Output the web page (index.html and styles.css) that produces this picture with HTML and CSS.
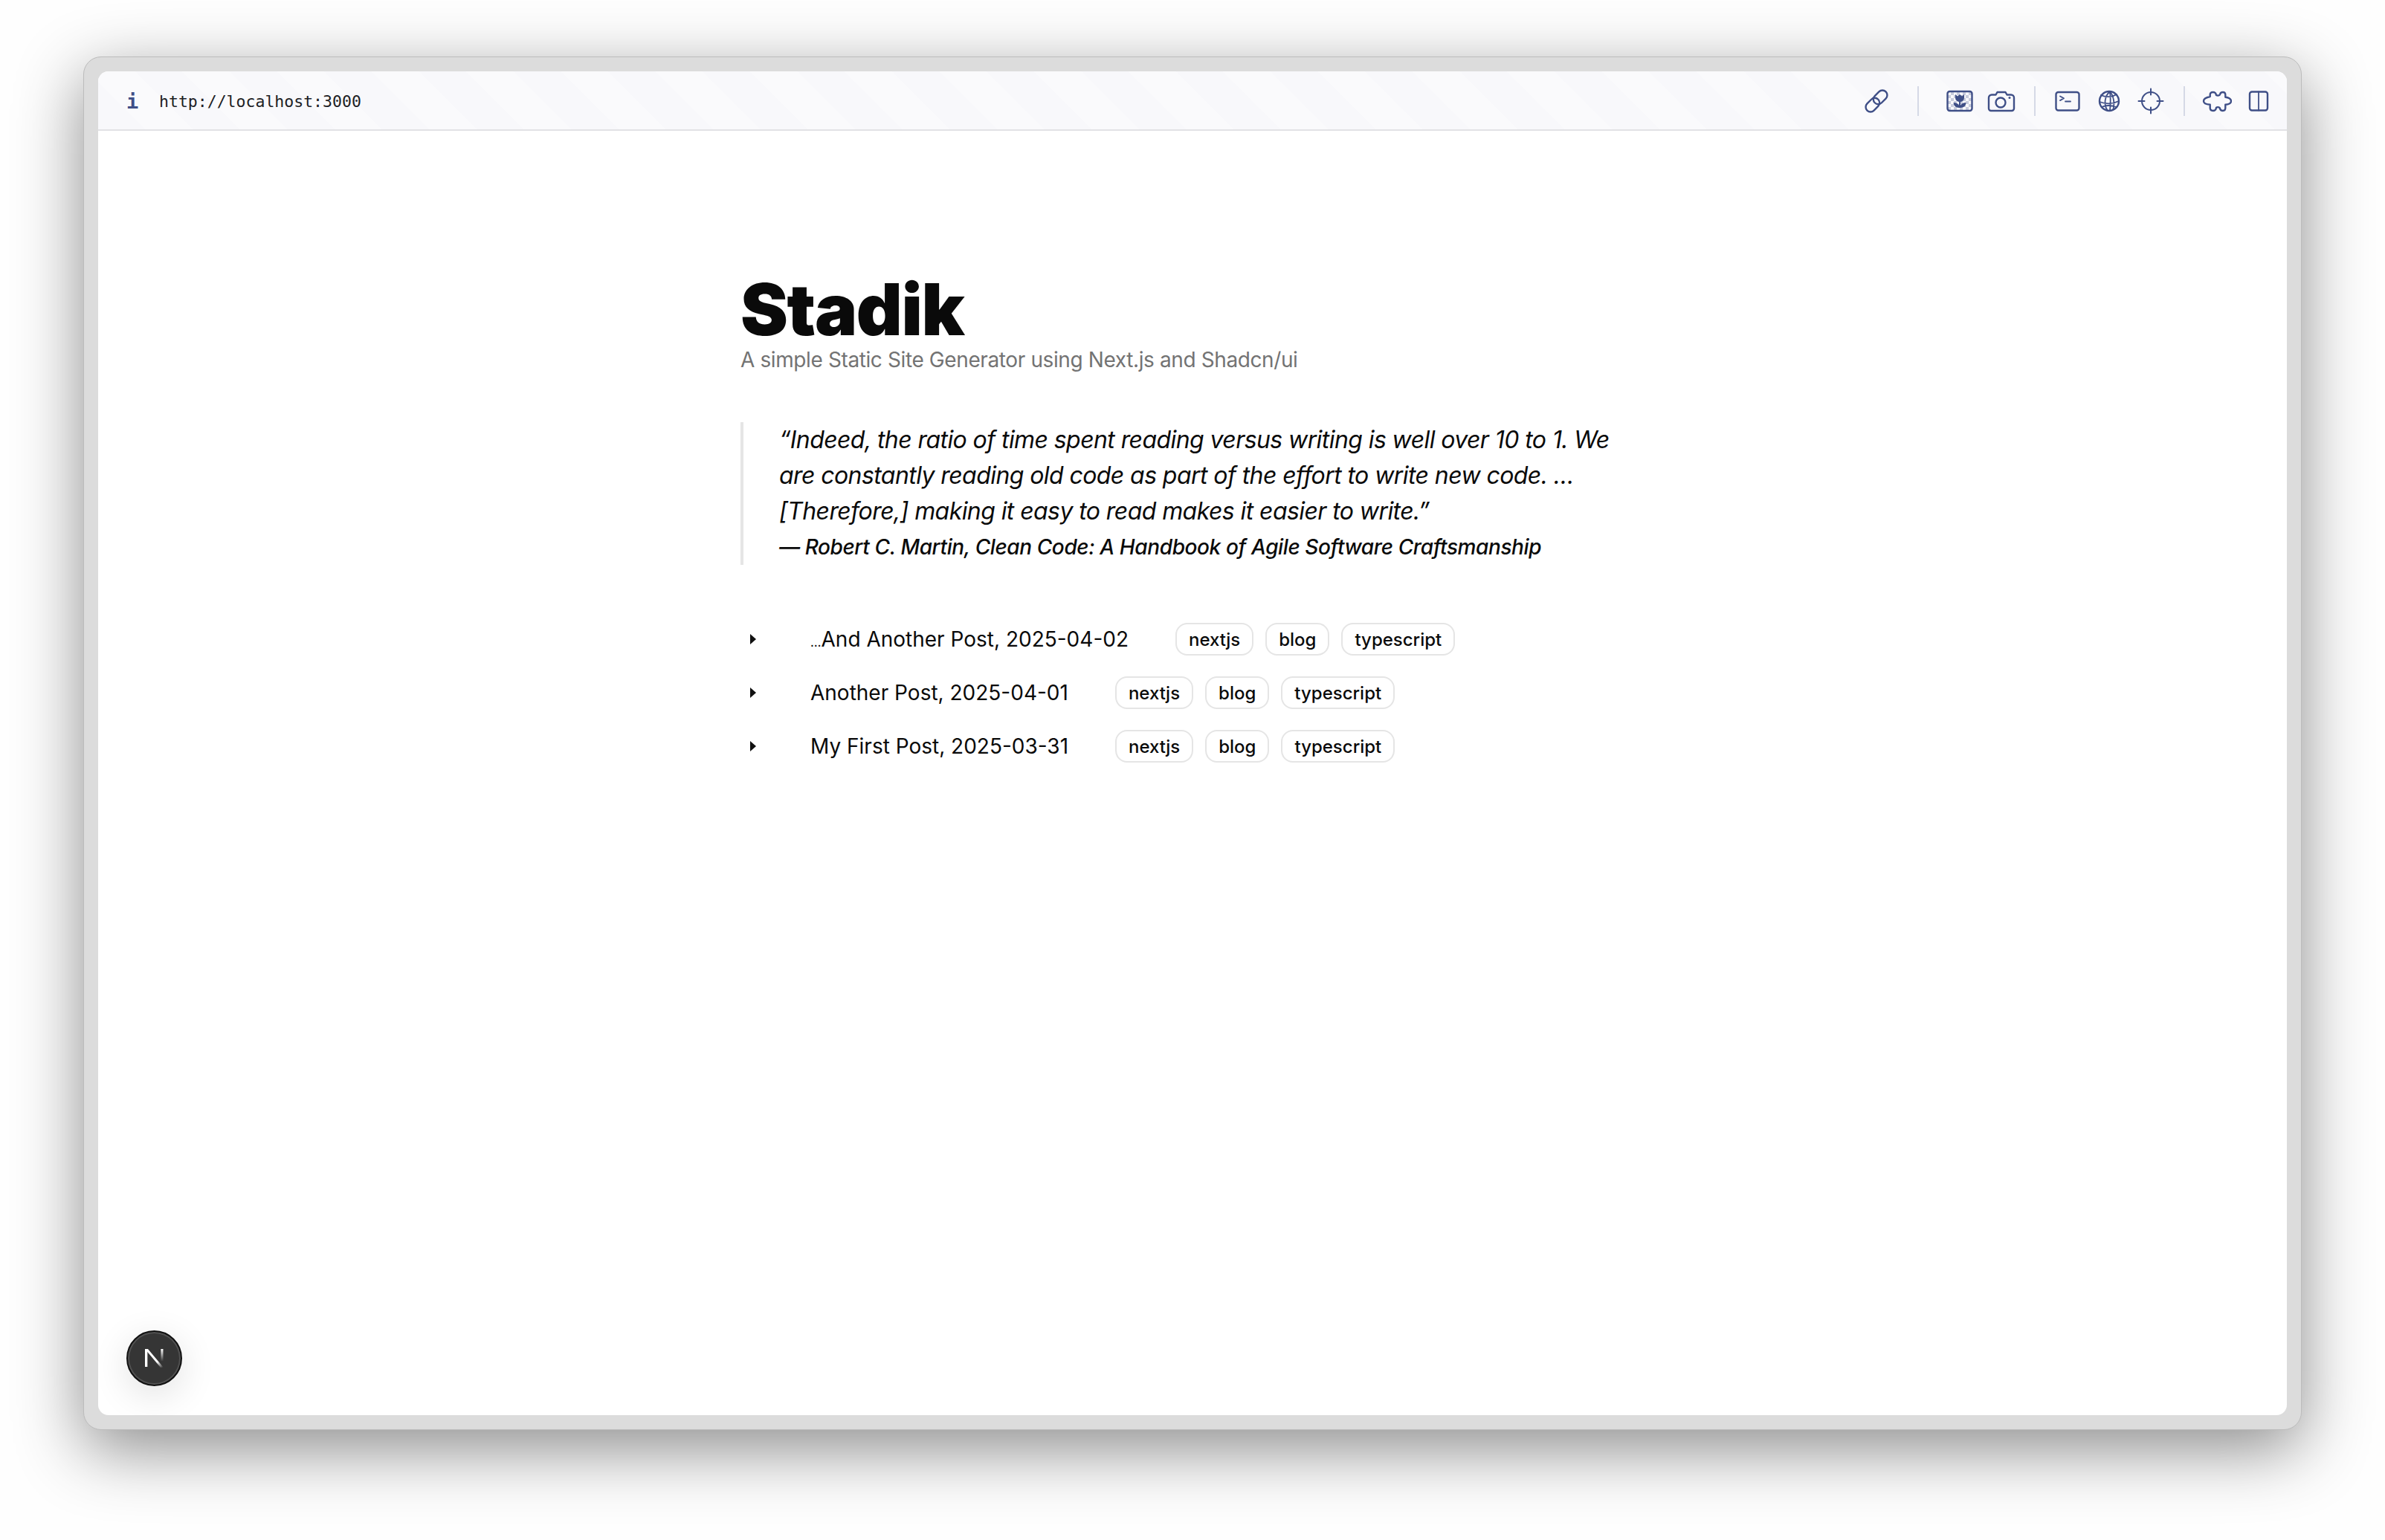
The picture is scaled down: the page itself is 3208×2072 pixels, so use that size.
FILE: index.html
```html
<!DOCTYPE html>
<html lang="en">
<head>
  <meta charset="UTF-8">
  <title>Stadik</title>
  <link rel="stylesheet" href="styles.css">
</head>
<body>
  <div class="frame">
    <div class="window">
      <!-- Toolbar -->
      <header class="toolbar">
        <span class="info">i</span>
        <span class="url">http://localhost:3000</span>
        <div class="tools">
          <svg class="icon" viewBox="0 0 40 40"><rect x="4.350" y="18.650" width="21" height="13" rx="6.500" transform="rotate(-45 14.850 25.150)"/><rect x="14.650" y="8.350" width="21" height="13" rx="6.500" transform="rotate(-45 25.150 14.850)"/></svg>
          <span class="sep sep-wide"></span>
          <svg class="icon" viewBox="0 0 40 40">
            <defs><pattern id="checker" width="8" height="8" patternUnits="userSpaceOnUse"><rect width="4" height="4" fill="#c8ccdc" stroke="none"/><rect x="4" y="4" width="4" height="4" fill="#c8ccdc" stroke="none"/></pattern></defs>
            <rect x="3.500" y="7" width="33" height="26" rx="3" fill="url(#checker)"/>
            <path class="solid" d="M14 11l3 2.500 3-2.500 3 2.500 3-2.500v4.500a6 5.500 0 0 1-12 0z"/>
            <path class="solid" d="M19 20h2v9h-2z"/>
            <path class="solid" d="M11.500 22q7.500 0 8.500 7q-8 .5-8.500-7zM28.500 22q-7.500 0-8.500 7q8 .5 8.500-7z"/>
          </svg>
          <svg class="icon" viewBox="0 0 40 40"><path d="M7 11.500h5.500l2-3.500h11l2 3.500H33a4 4 0 0 1 4 4V30a3 3 0 0 1-3 3H6a3 3 0 0 1-3-3V15.500a4 4 0 0 1 4-4z"/><circle cx="19" cy="22" r="6.500"/><circle class="solid" cx="31" cy="15.500" r="1.500"/></svg>
          <span class="sep"></span>
          <svg class="icon" viewBox="0 0 40 40"><rect x="4.500" y="8" width="31" height="24.500" rx="3"/><path class="thin" d="M10 13.500l5 2.800-5 2.800M17 20.500h7"/></svg>
          <svg class="icon" viewBox="0 0 40 40"><circle cx="20" cy="20" r="13"/><path class="thin" d="M21 7c-7 6-9 18-3 26M21 7c5 6 7 17 4 25M21 7c1 8 1 15 0 26M9 12c6 3 15 3 21-1M7 21c8 3 18 3 26-1M10 28c6-3 14-2 20 0"/></svg>
          <svg class="icon cross" viewBox="0 0 40 40"><circle cx="20" cy="20" r="12"/><path d="M20 3.500v8M20 28.500v8M3.500 20h8M28.500 20h8"/></svg>
          <span class="sep"></span>
          <svg class="icon" viewBox="0 0 40 40"><path d="M10.700 14V11.500C10.700 9 12.500 8 14.700 8C17 8 18.700 9.500 18.700 11C18.700 13 23.500 13 24 11C24.300 9.500 26 8 28 8C30 8 31.300 9.500 31.300 11.500V14.700C35 15 39 17 39 20C39 23 35 24.500 31.300 24.700V29C31.300 31.500 30 33 28 33C26 33 24.300 31.500 24 30C23.500 27.500 18.700 27.500 18.700 30C18.700 31.500 17 33 14.700 33C12.500 33 10.700 31.500 10.700 29V24.700C6 24.500 2 23 2 20C2 17 6 15 10.700 14Z"/></svg>
          <svg class="icon" viewBox="0 0 40 40"><rect x="8" y="7.500" width="24" height="25" rx="3"/><path class="thin" d="M20 7.500v25"/></svg>
        </div>
      </header>

      <main class="content">
        <h1 class="title">Stadik</h1>
        <p class="subtitle">A simple Static Site Generator using Next.js and Shadcn/ui</p>

        <blockquote class="quote">
          <p>“Indeed, the ratio of time spent reading versus writing is well over 10 to 1. We are constantly reading old code as part of the effort to write new code. … [Therefore,] making it easy to read makes it easier to write.”</p>
          <cite>— Robert C. Martin, Clean Code: A Handbook of Agile Software Craftsmanship</cite>
        </blockquote>

        <ul class="posts">
          <li class="post">
            <span class="arrow"></span>
            <span class="post-title"><span class="dots">…</span>And Another Post, 2025-04-02</span>
            <span class="tags"><span class="tag">nextjs</span><span class="tag">blog</span><span class="tag">typescript</span></span>
          </li>
          <li class="post">
            <span class="arrow"></span>
            <span class="post-title">Another Post, 2025-04-01</span>
            <span class="tags"><span class="tag">nextjs</span><span class="tag">blog</span><span class="tag">typescript</span></span>
          </li>
          <li class="post">
            <span class="arrow"></span>
            <span class="post-title">My First Post, 2025-03-31</span>
            <span class="tags"><span class="tag">nextjs</span><span class="tag">blog</span><span class="tag">typescript</span></span>
          </li>
        </ul>
      </main>

      <!-- Dev indicator -->
      <div class="badge">
        <svg viewBox="0 0 24 24" width="25" height="25">
          <defs>
            <linearGradient id="fadeA" gradientUnits="userSpaceOnUse" x1="4" y1="1" x2="23" y2="24"><stop offset="0.65" stop-color="#fff"/><stop offset="1" stop-color="#fff" stop-opacity="0"/></linearGradient>
            <linearGradient id="fadeB" gradientUnits="userSpaceOnUse" x1="0" y1="0" x2="0" y2="16"><stop offset="0" stop-color="#fff"/><stop offset="1" stop-color="#fff" stop-opacity="0"/></linearGradient>
          </defs>
          <path d="M0 0h3.200v23H0z" fill="#fff"/>
          <path d="M0 0h3.800L24 24h-3.800z" fill="url(#fadeA)"/>
          <path d="M20.500 0h3v17h-3z" fill="url(#fadeB)"/>
        </svg>
      </div>
    </div>
  </div>
</body>
</html>
```

FILE: styles.css
```css
/* Page and outer frame */
html, body {
  margin: 0;
  padding: 0;
}

body {
  width: 3208px;
  height: 2072px;
  box-sizing: border-box;
  padding: 76px 112px 148px;
  background: #fefefe;
  font-family: 'Inter', sans-serif;
  color: #0a0a0a;
  overflow: hidden;
}

.frame {
  height: 100%;
  box-sizing: border-box;
  padding: 19px;
  background: #dcdcdc;
  border: 1px solid #bcbcbc;
  border-radius: 24px;
  box-shadow: 0 26px 90px rgba(0, 0, 0, 0.45);
}

.window {
  position: relative;
  height: 100%;
  display: flex;
  flex-direction: column;
  background: white;
  border-radius: 14px;
  overflow: hidden;
}

/* Toolbar */
.toolbar {
  height: 80px;
  box-sizing: border-box;
  flex-shrink: 0;
  display: flex;
  align-items: center;
  padding: 2px 18px 0 38px;
  background: repeating-linear-gradient(45deg, #f8f8fb 0, #f8f8fb 45px, #fafafc 45px, #fafafc 90px);
  border-bottom: 2px solid #e2e2e5;
}

.info {
  width: 44px;
  font-family: 'DejaVu Sans Mono', monospace;
  font-weight: bold;
  font-size: 27px;
  color: #3f4f87;
}

.url {
  font-family: 'DejaVu Sans Mono', monospace;
  font-size: 21.5px;
  color: #202124;
}

.tools {
  margin-left: auto;
  display: flex;
  align-items: center;
  gap: 16px;
}

.icon {
  width: 40px;
  height: 40px;
  fill: none;
  stroke: #3f4f87;
  stroke-width: 2.4;
  stroke-linejoin: round;
  stroke-linecap: round;
}

.icon.cross {
  stroke-width: 2;
}

.icon .thin {
  stroke-width: 1.8;
}

.icon .solid {
  fill: #3f4f87;
  stroke: none;
}

.sep {
  width: 2px;
  height: 40px;
  margin: 0 7px 0 8px;
  background: #d5d9e6;
}

.sep-wide {
  margin: 0 19px;
}

/* Main content */
.content {
  width: 1216px;
  margin: 0 auto;
  padding-top: 192px;
}

.title {
  margin: 0;
  font-size: 96px;
  line-height: 96px;
  font-weight: 900;
  letter-spacing: -1.4px;
}

.subtitle {
  margin: 0;
  font-size: 28px;
  line-height: 40px;
  letter-spacing: -0.39px;
  color: #737373;
}

.quote {
  margin: 64px 0 0;
  padding-left: 48px;
  border-left: 4px solid #e5e5e5;
  font-size: 32px;
  line-height: 48px;
  font-style: italic;
}

.quote p {
  margin: 0;
  letter-spacing: -0.58px;
}

.quote cite {
  display: block;
  font-size: 28px;
  font-weight: 500;
  letter-spacing: -0.4px;
}

/* The ellipsis is set small, the dots sit close together */
.dots {
  font-size: 0.6em;
  line-height: 0;
}

/* Post list */
.posts {
  list-style: none;
  margin: 78px 0 0;
  padding: 0;
  display: flex;
  flex-direction: column;
  gap: 28px;
}

.post {
  height: 44px;
  display: flex;
  align-items: center;
  padding-left: 13px;
  font-size: 28px;
}

.arrow {
  width: 0;
  height: 0;
  margin-right: 73px;
  border-left: 8px solid #111;
  border-top: 7px solid transparent;
  border-bottom: 7px solid transparent;
}

.tags {
  display: flex;
  gap: 16px;
  margin-left: 63px;
}

.tag {
  height: 40px;
  padding: 0 16px;
  display: flex;
  align-items: center;
  font-size: 24px;
  font-weight: 450;
  border: 2px solid #e5e5e5;
  border-radius: 16px;
}

/* Dev indicator */
.badge {
  position: absolute;
  left: 38px;
  bottom: 39px;
  width: 75px;
  height: 75px;
  box-sizing: border-box;
  display: flex;
  align-items: center;
  justify-content: center;
  background: #353535;
  border: 2px solid #111;
  border-radius: 50%;
  box-shadow: inset 0 0 0 2px rgba(255, 255, 255, 0.14), 0 12px 50px rgba(0, 0, 0, 0.12);
}
```
